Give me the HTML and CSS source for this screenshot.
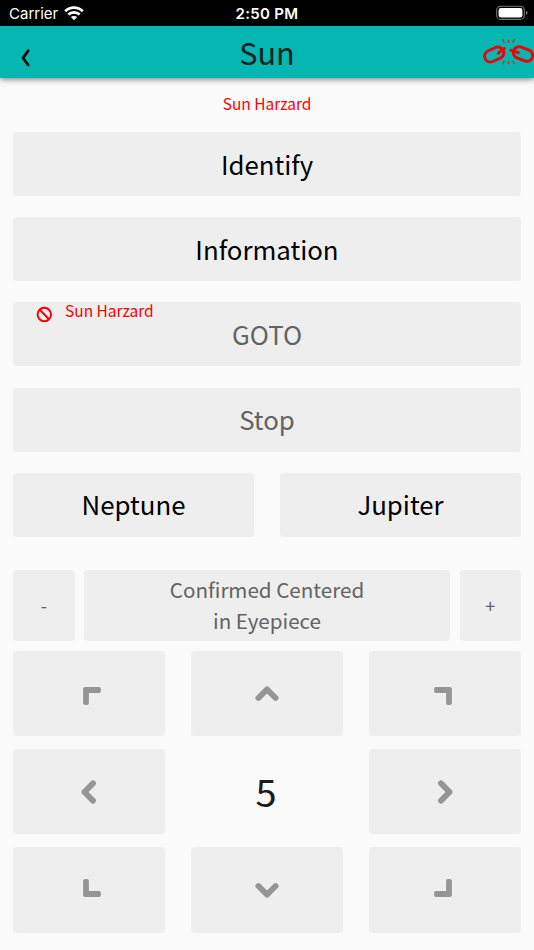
FILE: index.html
```html
<!DOCTYPE html>
<html lang="en">
<head>
<meta charset="utf-8">
<title>Sun</title>
<link rel="stylesheet" href="styles.css">
</head>
<body>
<div class="status">
  <div class="carrier">Carrier
    <svg class="wifi" width="20" height="16" viewBox="0 0 20 16"><g fill="none" stroke="#fff" stroke-width="2.7"><path d="M1.2 6.3C6.2 1.5 13.8 1.5 18.8 6.3"/><path d="M4.3 9.6C7.5 6.6 12.5 6.6 15.7 9.6"/></g><path d="M10 15.2L6.8 12.1C8.5 10.5 11.5 10.5 13.2 12.1Z" fill="#fff"/></svg>
  </div>
  <div class="clock">2:50 PM</div>
  <svg class="battery" width="32" height="16" viewBox="0 0 32 16"><rect x=".7" y="1.2" width="27.6" height="13.2" rx="4" fill="none" stroke="#777" stroke-width="1.1"/><rect x="2.6" y="3.1" width="23.8" height="9.4" rx="2.3" fill="#fff"/><path d="M30 5.5Q33 7.8 30 10.1Z" fill="#888"/></svg>
</div>
<header class="bar">
  <svg class="back" width="12" height="20" viewBox="0 0 12 20"><path d="M9.2 2.8L4 10L9.2 17" fill="none" stroke="#000" stroke-width="2.7" stroke-linecap="round" stroke-linejoin="round"/></svg>
  <h1 class="title">Sun</h1>
  <svg class="unlink" width="52" height="30" viewBox="0 0 52 30"><g fill="none" stroke="#f30000" stroke-width="2.9" stroke-linecap="round" stroke-linejoin="round"><rect x="1.2" y="9.8" width="20" height="11.6" rx="5.8" transform="rotate(-25 11 15.6)"/><path d="M15.4 14.2L18.6 11L21.4 9.4"/><rect x="30" y="9.2" width="20" height="11.6" rx="5.8" transform="rotate(22 40 15)"/><path d="M28 11.2L31 12.2L35.4 13.6"/></g><g stroke="#b9342e" stroke-width="1.3"><path d="M19.6.2L21.4 3.8M25.5.5V4M31.4.2L29.6 3.8M21.4 21.7L19.6 25.2M25.5 22V25.4M29.6 21.7L31.4 25.2"/></g></svg>
</header>
<main class="page">
  <p class="warning">Sun Harzard</p>
  <div class="actions">
    <button class="btn">Identify</button>
    <button class="btn">Information</button>
    <button class="btn off goto">GOTO
      <span class="hazard"><svg width="17" height="17" viewBox="0 0 17 17"><g fill="none" stroke="#f00" stroke-width="2"><circle cx="8.3" cy="8.5" r="6.7"/><path d="M3.8 3.8L13 13.2"/></g></svg><span>Sun Harzard</span></span>
    </button>
    <button class="btn off">Stop</button>
    <div class="pair"><button class="btn">Neptune</button><button class="btn">Jupiter</button></div>
  </div>
  <div class="align">
    <button class="btn off small">-</button>
    <button class="btn off confirm">Confirmed Centered<br>in Eyepiece</button>
    <button class="btn off small">+</button>
  </div>
  <div class="pad">
    <button class="btn"><svg class="corner left" viewBox="0 0 18 18"><path d="M2 16V2H16V4H4V16Z"/></svg></button>
    <button class="btn"><svg class="chev" viewBox="0 0 28 28"><path d="M5.4 18L14 9.4L22.6 18"/></svg></button>
    <button class="btn"><svg class="corner right" viewBox="0 0 18 18"><path d="M2 2H16V16H14V4H2Z"/></svg></button>
    <button class="btn"><svg class="chev" viewBox="0 0 28 28"><path d="M18 5.4L9.4 14L18 22.6"/></svg></button>
    <div class="speed">5</div>
    <button class="btn"><svg class="chev" viewBox="0 0 28 28"><path d="M10 5.4L18.6 14L10 22.6"/></svg></button>
    <button class="btn"><svg class="corner left low" viewBox="0 0 18 18"><path d="M2 2V16H16V14H4V2Z"/></svg></button>
    <button class="btn"><svg class="chev" viewBox="0 0 28 28"><path d="M5.4 10L14 18.6L22.6 10"/></svg></button>
    <button class="btn"><svg class="corner right low" viewBox="0 0 18 18"><path d="M2 16H16V2H14V14H2Z"/></svg></button>
  </div>
</main>
</body>
</html>
```
FILE: styles.css
```css
* { box-sizing: border-box; }
body {
  margin: 0;
  height: 950px;
  overflow: hidden;
  background: #fafafa;
  color: #000;
  font-family: "Noto Sans CJK SC", "Noto Sans", sans-serif;
}
.status {
  height: 26px;
  padding: 2px 6px 0 9px;
  display: grid;
  grid-template-columns: 1fr auto 1fr;
  align-items: center;
  background: #000;
  color: #fff;
  font: 15px/22px Inter, sans-serif;
}
.carrier { display: flex; align-items: center; gap: 6px; }
.wifi { margin-top: -3px; }
.clock { font-weight: 600; font-size: 15px; letter-spacing: .3px; margin-right: 3px; }
.battery { justify-self: end; margin-top: -2px; }
.bar {
  height: 52px;
  display: grid;
  grid-template-columns: 1fr auto 1fr;
  align-items: center;
  background: #06b6b1;
  box-shadow: 0 1px 6px rgba(0, 0, 0, .55);
}
.back { margin: 11px 0 0 19px; }
.title { margin: -1px 0 0; font-size: 30.5px; line-height: 50px; font-weight: 400; color: #04201f; }
.unlink { justify-self: end; margin-right: -1px; margin-top: 4px; }
.page { padding: 0 13px; }
.warning {
  margin: 0;
  height: 54px;
  padding-top: 13px;
  font-size: 15.5px;
  line-height: 24px;
  text-align: center;
  color: #f00;
}
.actions { display: flex; flex-direction: column; gap: 21.2px; }
.btn {
  position: relative;
  display: flex;
  align-items: center;
  justify-content: center;
  width: 100%;
  height: 64px;
  padding: 0 0 1px;
  border: 0;
  border-radius: 4px;
  background: #eee;
  color: #000;
  font: 400 25.8px/38px "Noto Sans CJK SC", "Noto Sans", sans-serif;
}
.off { color: #636363; }
.hazard {
  position: absolute;
  left: 23px;
  top: -6px;
  display: flex;
  align-items: center;
  gap: 12px;
  font-size: 15.5px;
  line-height: 24px;
  color: #f00;
}
.hazard svg { margin-top: 10px; }
.pair { display: flex; gap: 26px; }
.align {
  margin-top: 33.2px;
  display: grid;
  grid-template-columns: 61.5px 1fr 61.5px;
  gap: 9.5px;
}
.align .btn { height: 71px; }
.align .confirm { font-size: 20.6px; line-height: 31px; padding: 0 0 1px; }
.align .small { font-size: 18px; padding: 0 0 1px; }
.pad {
  margin-top: 10px;
  display: grid;
  grid-template-columns: repeat(3, 1fr);
  grid-auto-rows: 85.2px;
  gap: 13px 26px;
}
.pad .btn { height: 100%; padding: 0; }
.pad svg { fill: none; stroke: #959595; stroke-width: 5.8; stroke-linecap: round; stroke-linejoin: round; }
.pad .corner { width: 18px; height: 18px; margin-top: 5px; fill: #959595; stroke-width: 3.8; }
.pad .left { margin-left: 5px; }
.pad .right { margin-right: 5px; }
.pad .low { margin-top: -4px; }
.chev { width: 28px; height: 28px; }
.speed {
  display: flex;
  align-items: center;
  justify-content: center;
  padding: 0 2px 2px 0;
  font-size: 38px;
  line-height: 50px;
  color: #1c1c1c;
}
```
